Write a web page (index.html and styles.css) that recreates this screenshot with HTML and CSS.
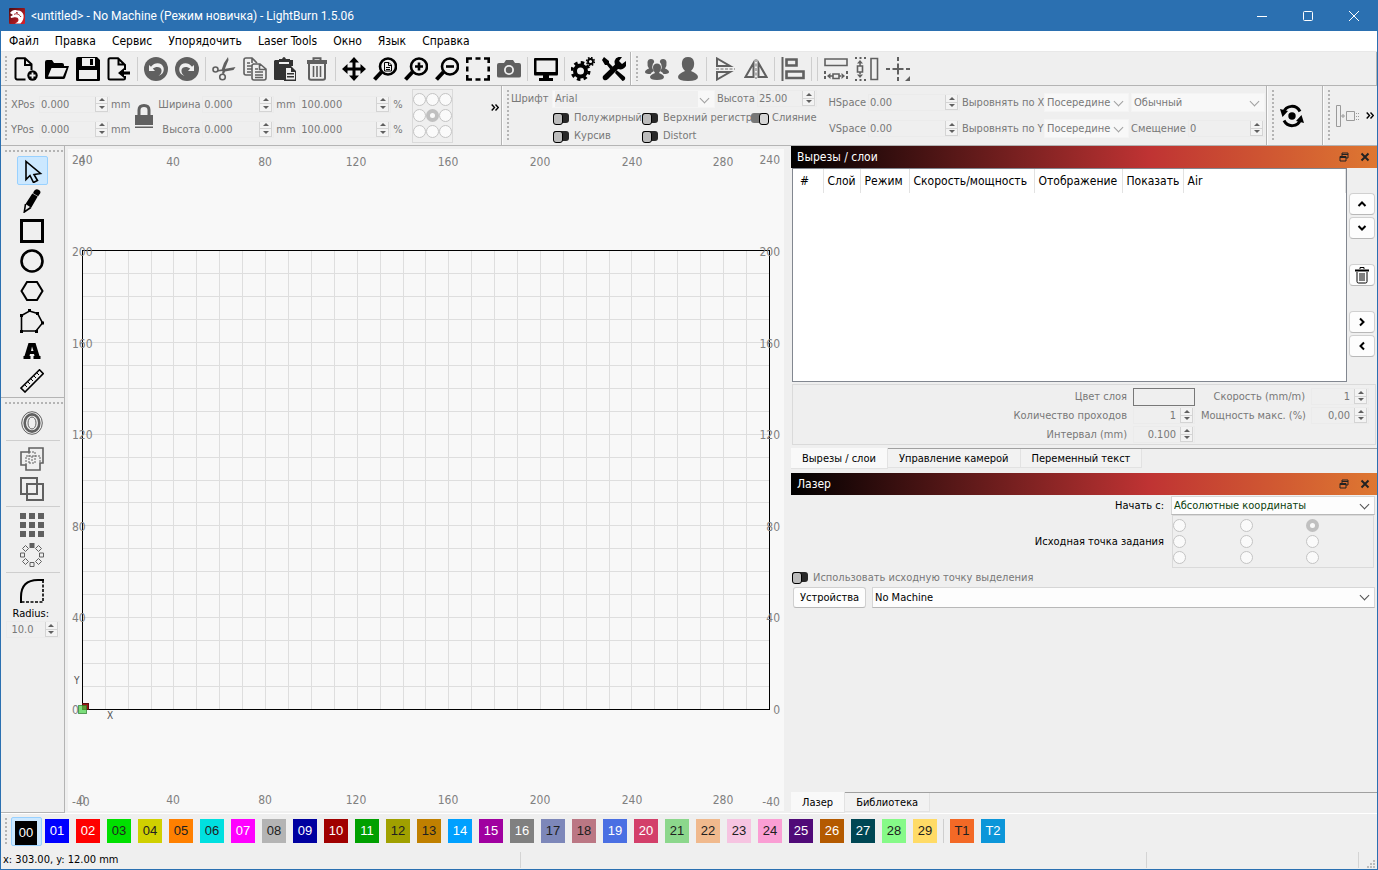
FILE: index.html
```html
<!DOCTYPE html>
<html lang="ru">
<head>
<meta charset="utf-8">
<title>&lt;untitled&gt; - No Machine (Режим новичка) - LightBurn 1.5.06</title>
<link rel="stylesheet" href="styles.css">
</head>
<body>
<div class="window">
  <header class="titlebar">
    <svg class="app-logo" viewBox="0 0 16 16"><defs><linearGradient id="lg" x1="0" x2="1" y1="0" y2="1"><stop offset="0" stop-color="#4a0d12"/><stop offset="1" stop-color="#e0202a"/></linearGradient></defs><rect width="16" height="16" rx="1" fill="url(#lg)"/><path fill="#fff" d="M1 5c2-2.500 4-3.500 7-2.500C11 2 14 4 14.500 7c.5 3-.5 6-3 8.500H6c2-1 3.500-2 3.500-3.500C9.500 9.500 7 9 4.500 9.500L2 10l-.5-1.500L4 7z"/><path d="M5 6.500C7 5 10 6 12 9M7 4.500l2 .5" stroke="#9c1a20" fill="none"/></svg>
    <h1 class="window-title">&lt;untitled&gt; - No Machine (Режим новичка) - LightBurn 1.5.06</h1>
    <div class="window-controls">
      <button aria-label="Свернуть"><svg viewBox="0 0 10 10"><path d="M0 5.500h10"/></svg></button>
      <button aria-label="Развернуть"><svg viewBox="0 0 10 10"><rect x=".5" y=".5" width="9" height="9" rx="1"/></svg></button>
      <button aria-label="Закрыть"><svg viewBox="0 0 10 10"><path d="M0 0l10 10M10 0L0 10"/></svg></button>
    </div>
  </header>

  <nav class="menubar">
    <button>Файл</button><button>Правка</button><button>Сервис</button><button>Упорядочить</button><button>Laser Tools</button><button>Окно</button><button>Язык</button><button>Справка</button>
  </nav>

  <div class="toolrow main-tools">
    <div class="toolbar">
      <span class="grip"></span>
      <button class="tool" aria-label="Создать"><svg viewBox="0 0 24 24"><path class="l2" d="M11.500 22.500H3a2 2 0 0 1-1.500-1.500V3A2 2 0 0 1 3 1.200h8l6.500 6V13M11 1.500V8h6"/><circle cx="18.500" cy="18.500" r="5.200" class="f"/><path stroke="#efefef" stroke-width="1.800" d="M15.500 18.500h6M18.500 15.500v6"/></svg></button>
      <button class="tool" aria-label="Открыть"><svg viewBox="0 0 24 24"><path class="f" d="M0 21V5q0-2 2-2h5l2 3h8q2 0 2 2v1h5l-4 12q-.5 1-1.500 1H1q-1 0-1-1z"/><path fill="#efefef" d="M6.500 11H21.500L18 19.500H3z"/></svg></button>
      <button class="tool" aria-label="Сохранить"><svg viewBox="0 0 24 24"><path class="f" fill-rule="evenodd" d="M2 0h19l3 3v20q0 1-1 1H1q-1 0-1-1V2q0-2 2-2zM6 1v8h13V1zM3 13v9h18v-9z"/><rect x="14" y="2" width="3" height="6" class="f"/></svg></button>
      <button class="tool" aria-label="Импорт"><svg viewBox="0 0 24 24"><path class="l2" d="M18 13V8l-7-6.800H3Q1.500 1.200 1.500 3v18q0 1.500 1.500 1.500h13.500q1.500 0 1.500-1.500v-2M11.500 1.500V7.500H18"/><path class="f" d="M11 16l6-5v3.500h6v3h-6V21z"/></svg></button>
      <i class="sep"></i>
      <button class="tool" aria-label="Отменить"><svg class="gray" viewBox="0 0 24 24"><circle cx="12" cy="12" r="12" class="f"/><path d="M5 8v6h6l-2.200-2.500C12 9 17 9.500 17.500 13c.3 3-1 4.500-3 6 4-1.500 6-4.500 5-8.500C18 5.500 11 4.500 7 9.700z" fill="#efefef"/></svg></button>
      <button class="tool" aria-label="Вернуть"><svg class="gray" viewBox="0 0 24 24"><circle cx="12" cy="12" r="12" class="f"/><path d="M19 8v6h-6l2.200-2.500C12 9 7 9.500 6.500 13c-.3 3 1 4.500 3 6-4-1.500-6-4.500-5-8.500C6 5.500 13 4.500 17 9.700z" fill="#efefef"/></svg></button>
      <i class="sep"></i>
      <button class="tool" aria-label="Вырезать"><svg class="gray" viewBox="0 0 24 24"><circle cx="3.500" cy="12.500" r="2.500" class="l"/><circle cx="10.500" cy="20" r="2.800" class="l"/><path class="f" d="M6 13l6-1L23.500 10l-2 3-8.500 1.500L12 17l-2-.5.500-2.500-4.500.5zM9.500 13L12 6l4-6 .5 3-4.500 11z"/></svg></button>
      <button class="tool" aria-label="Копировать"><svg class="gray" viewBox="0 0 24 24"><path class="l" d="M8 18H3q-2 0-2-2V3q0-2 2-2h6l5 5M9 1v5M4 6h3M4 9h5M4 12h5M4 15h4"/><path class="l" fill="#efefef" d="M10 7h7l6 5v9q0 2-2 2H11q-2 0-2-2V9q0-2 2-2zM16.500 7v5.500H23M12 12h3M12 15h8M12 18h8M12 20.500h8"/></svg></button>
      <button class="tool" aria-label="Вставить"><svg class="dark" viewBox="0 0 24 24"><path class="f" d="M1 3h4V2h3q2-4 4 0h4v1h3v6h-8v14H1q-1 0-1-1V4zM5 5v2h10V5z" fill-rule="evenodd"/><path class="f" d="M11 9h6l5 5v10H10V10z"/><path fill="#efefef" d="M12 11h5v4h4v7.500h-9z"/><path class="f" d="M13 16h7v1.500h-7zM13 19h7v1.500h-7z"/></svg></button>
      <button class="tool" aria-label="Удалить"><svg class="gray" viewBox="0 0 24 24"><path class="l2" d="M4 7v14q0 1.800 2 1.800h12q2 0 2-1.800V7M8.500 3V1.200h7V3"/><path class="f" d="M2 3h20v4H2z"/><path class="l" d="M8.500 9v11M12 9v11M15.500 9v11"/></svg></button>
      <i class="sep"></i>
      <button class="tool" aria-label="Переместить"><svg viewBox="0 0 24 24"><path class="l3" d="M12 3v18M3 12h18"/><path class="f" d="M12 0l5 5.500H7zM12 24l5-5.500H7zM0 12l5.500-5v10zM24 12l-5.500-5v10z"/></svg></button>
      <button class="tool" aria-label="Масштаб по странице"><svg viewBox="0 0 24 24"><circle cx="15" cy="9.500" r="8" class="l25"/><path class="l4" d="M8.500 15L1.500 22.500"/><path class="l1" d="M11.500 5.500h4.500l2.500 2.500V14h-7zM15.500 5.500V8.500h3M13 10.500h4M13 12.500h4"/></svg></button>
      <button class="tool" aria-label="Приблизить"><svg viewBox="0 0 24 24"><circle cx="15" cy="9.500" r="8" class="l25"/><path class="l4" d="M8.500 15L1.500 22.500"/><path class="l25" d="M11 9.500h8M15 5.500v8"/></svg></button>
      <button class="tool" aria-label="Отдалить"><svg viewBox="0 0 24 24"><circle cx="15" cy="9.500" r="8" class="l25"/><path class="l4" d="M8.500 15L1.500 22.500"/><path class="l25" d="M11 9.500h8"/></svg></button>
      <button class="tool" aria-label="Рамка"><svg viewBox="0 0 24 24"><path class="l25" d="M1.200 6V1.500H6M9.500 1.500h5M18 1.500h4.700V6M22.700 9.500v5M22.700 18v4.500H18M14.500 22.500h-5M6 22.500H1.200V18M1.200 14.500v-5"/></svg></button>
      <button class="tool" aria-label="Камера"><svg class="gray" viewBox="0 0 24 24"><path class="f" d="M2 6h5l2-3h7l2 3h4q2 0 2 2v11q0 1.500-2 1.500H2q-2 0-2-1.500V8q0-2 2-2z"/><circle cx="12" cy="13" r="5" fill="#efefef"/><circle cx="12" cy="13" r="3.200" class="f"/></svg></button>
      <i class="sep"></i>
      <button class="tool" aria-label="Просмотр"><svg viewBox="0 0 24 24"><path class="f" fill-rule="evenodd" d="M1 1h22q1 0 1 1v15q0 1.500-1 1.500H15V21h4v3H5v-3h4v-2.500H1Q0 18.500 0 17V2q0-1 1-1zM2.500 3.500V15h19V3.500z"/></svg></button>
      <i class="sep"></i>
      <button class="tool" aria-label="Настройки"><svg viewBox="0 0 24 24"><circle cx="9.500" cy="14" r="5.500" stroke="#000" stroke-width="4" fill="none"/><circle cx="9.500" cy="14" r="8.500" stroke="#000" stroke-width="3" stroke-dasharray="3.500 3.176" fill="none"/><circle cx="19.500" cy="4.500" r="2.500" stroke="#000" stroke-width="1.800" fill="none"/><circle cx="19.500" cy="4.500" r="3.900" stroke="#000" stroke-width="1.600" stroke-dasharray="1.600 1.463" fill="none"/></svg></button>
      <button class="tool" aria-label="Настройки устройства"><svg viewBox="0 0 24 24"><path class="f" d="M2 0l5 4v2l4 4-2.500 2.500L5 8H3L0 3zM14.500 13l8.500 7q1 3-2.500 4L13 16z"/><path class="f" d="M24 4l-4 3-3-3 3-4q-6-1-7.500 4 0 3 .5 3.500L1 19q-1 3 1 4t4-1l10-10q5 1.500 8-3z"/></svg></button>
    </div>
    <div class="toolbar last">
      <span class="grip"></span>
      <button class="tool" aria-label="Группировать"><svg class="gray" viewBox="0 0 24 24"><path class="f" d="M0 15q0-2 4-3.500Q2 9 2.500 5 3 2 6 2t3.200 3q-2 2-2 5 0 2 1.800 4-3 1.500-3.500 3Q0 17 0 15zM24 15q0-2-4-3.500 2-2.500 1.500-6.500Q21 2 18 2t-3.200 3q2 2 2 5 0 2-1.800 4 3 1.500 3.500 3 5.500 0 5.500-2z"/><path class="f" d="M5 20q0-2 5-4-2.500-3-2-6 .5-3.500 4-3.500t4 3.500q.5 3-2 6 5 2 5 4 0 3-7 3t-7-3z"/></svg></button>
      <button class="tool" aria-label="Разгруппировать"><svg class="gray" viewBox="0 0 24 24"><path class="f" d="M2 20q0-3 7-6-4-4-3-9 .8-5 6-5t6 5q1 5-3 9 7 3 7 6 0 4-10 4T2 20z"/></svg></button>
      <i class="sep"></i>
      <button class="tool" aria-label="Отразить по вертикали"><svg class="gray" viewBox="0 0 24 24"><path class="l2" d="M4 9V1.500L17 9zM4 15v7.500L17 15z"/><path d="M3 12h19" class="l2 faint" stroke-dasharray="3 1.500"/></svg></button>
      <button class="tool" aria-label="Отразить по горизонтали"><svg class="gray" viewBox="0 0 24 24"><path class="l2" d="M9.500 6v14H1.500zM14.500 6v14h8z"/><path d="M12 2v20" class="l2 faint" stroke-dasharray="3 1.500"/></svg></button>
      <i class="sep"></i>
      <button class="tool" aria-label="Выровнять по левому краю"><svg class="gray" viewBox="0 0 24 24"><path class="l2" d="M1.500 0v24"/><path class="l25" d="M5.500 2.500h10v6h-10zM5.500 14.500h17v6.500h-17z"/></svg></button>
      <i class="sep"></i><i class="sep"></i>
      <button class="tool" aria-label="Распределить по горизонтали"><svg class="gray" viewBox="0 0 24 24"><path class="l" d="M1 2h22v6.500H1zM9 17h6v4.500H9z"/><path class="f" d="M3 19l3.500-3v6zM21 19l-3.500-3v6zM6 18.300h3v1.500H6zM15 18.300h3v1.500h-3z"/><path class="l2" stroke-dasharray="3 2" d="M1 14v10M23 14v10"/></svg></button>
      <button class="tool" aria-label="Распределить по вертикали"><svg class="gray" viewBox="0 0 24 24"><path class="l" d="M16 1.500h6.500v21H16zM2.500 9h5v6h-5z"/><path class="f" d="M5 3l3 3.500H2zM5 21l3-3.500H2zM4.300 6h1.500v3H4.300zM4.300 15h1.500v3H4.300z"/><path class="l2" stroke-dasharray="2 2.500" d="M0 1h11M0 23h11"/></svg></button>
      <button class="tool" aria-label="Переместить в центр"><svg class="gray" viewBox="0 0 24 24"><path class="l2" d="M12 0v4M12 6.500v11M12 20v4M0 12h4M6.500 12h11M20 12h4"/><path class="f" d="M24 19v5h-5z"/></svg></button>
    </div>
  </div>

  <div class="toolrow props">
    <div class="toolbar shape-props">
      <span class="grip"></span>
      <div class="pos-grid">
        <label for="xpos">XPos</label><span class="spin"><input id="xpos" value="0.000" disabled><span class="steps"><button></button><button></button></span></span><span>mm</span>
        <label for="ypos">YPos</label><span class="spin"><input id="ypos" value="0.000" disabled><span class="steps"><button></button><button></button></span></span><span>mm</span>
      </div>
      <button class="lock" aria-label="Сохранять пропорции"><svg class="gray" viewBox="0 0 20 24"><path class="l3" d="M5 11V6q0-4.500 5-4.500T15 6v5"/><path class="f" d="M1 11h18v10H1zM1 22.500h18V24H1z"/></svg></button>
      <div class="size-grid">
        <label for="w">Ширина</label><span class="spin"><input id="w" value="0.000" disabled><span class="steps"><button></button><button></button></span></span><span>mm</span><span class="spin"><input aria-label="Ширина %" value="100.000" disabled><span class="steps"><button></button><button></button></span></span><span>%</span>
        <label for="h">Высота</label><span class="spin"><input id="h" value="0.000" disabled><span class="steps"><button></button><button></button></span></span><span>mm</span><span class="spin"><input aria-label="Высота %" value="100.000" disabled><span class="steps"><button></button><button></button></span></span><span>%</span>
      </div>
      <div class="anchor" role="radiogroup" aria-label="Точка привязки">
        <input type="radio" name="an"><input type="radio" name="an"><input type="radio" name="an"><input type="radio" name="an"><input type="radio" name="an" checked><input type="radio" name="an"><input type="radio" name="an"><input type="radio" name="an"><input type="radio" name="an">
      </div>
      <button class="more push" aria-label="Ещё"><svg viewBox="0 0 8 7"><path d="M.7.500l2.800 3-2.800 3M4.500.5l2.800 3-2.800 3"/></svg></button>
    </div>
    <div class="toolbar font-props">
      <span class="grip"></span>
      <div class="font-block">
        <div class="font-row">
          <label for="font">Шрифт</label><span class="combo font-select"><select id="font" disabled><option>Arial</option></select></span>
          <label for="fh">Высота</label><span class="spin"><input id="fh" value="25.00" disabled><span class="steps"><button></button><button></button></span></span>
        </div>
        <div class="font-flags">
          <label><input type="checkbox" class="toggle">Полужирный</label><label><input type="checkbox" class="toggle">Верхний регистр</label><label><input type="checkbox" class="toggle" checked>Слияние</label>
          <label><input type="checkbox" class="toggle">Курсив</label><label><input type="checkbox" class="toggle">Distort</label>
        </div>
      </div>
      <div class="space-grid">
        <label for="hs">HSpace</label><span class="spin"><input id="hs" value="0.00" disabled><span class="steps"><button></button><button></button></span></span>
        <label for="ax">Выровнять по X</label><span class="combo"><select id="ax" disabled><option>Посередине</option></select></span>
        <span class="combo"><select aria-label="Режим" disabled><option>Обычный</option></select></span>
        <label for="vs">VSpace</label><span class="spin"><input id="vs" value="0.00" disabled><span class="steps"><button></button><button></button></span></span>
        <label for="ay">Выровнять по Y</label><span class="combo"><select id="ay" disabled><option>Посередине</option></select></span>
        <span class="offset"><label for="off">Смещение</label><span class="spin"><input id="off" value="0" disabled><span class="steps"><button></button><button></button></span></span></span>
      </div>
    </div>
    <div class="toolbar refresh">
      <span class="grip"></span>
      <button class="tool" aria-label="Обновить"><svg viewBox="0 0 24 24"><path class="l3" d="M3.500 8.500C6 1 16 0 20 7.500M20.500 15.500C18 23 8 24 4 16.500"/><path class="f" d="M0 5l8 2-5.500 6zM24 19l-8-2 5.500-6z"/><circle cx="12" cy="12" r="3.700" class="f"/></svg></button>
    </div>
    <div class="toolbar dock-props">
      <span class="grip"></span>
      <svg class="dock-icon" viewBox="0 0 24 24"><path d="M.5 1.500h4v21h-4zM10.500 7.500h8v9h-8M10.500 7.500v9M5 12h4M7 10v4"/><path stroke-dasharray="1 1" d="M20 9.500h4M20 12.500h4M20 15.500h4"/></svg>
      <button class="more" aria-label="Ещё"><svg viewBox="0 0 8 7"><path d="M.7.500l2.800 3-2.800 3M4.500.5l2.800 3-2.800 3"/></svg></button>
    </div>
  </div>

  <main class="workspace">
    <aside class="side-tools">
      <div class="side-group">
        <span class="grip-h"></span>
        <button class="tool active" aria-label="Выделение"><svg viewBox="0 0 24 24"><path class="l" d="M6 2.500v18l4-4 3.500 7 4-2-3.500-6 6.500-1z"/></svg></button>
        <button class="tool" aria-label="Карандаш"><svg viewBox="0 0 24 24"><path class="f" d="M14 2q2-3 5-1t0 5l-.8 1.200-5.200-3zM12.300 4.500l5.400 3-6.500 11.200L5.500 15z"/><path class="l" d="M5.500 15l-1.200 8 6.500-4.500"/></svg></button>
        <button class="tool" aria-label="Прямоугольник"><svg viewBox="0 0 24 24"><rect x="1.500" y="1.500" width="21" height="21" class="l3"/></svg></button>
        <button class="tool" aria-label="Эллипс"><svg viewBox="0 0 24 24"><circle cx="12" cy="12" r="10.500" class="l25"/></svg></button>
        <button class="tool" aria-label="Многоугольник"><svg viewBox="0 0 24 24"><path class="l2" d="M1.500 12L7 3h10l5.500 9L17 21H7z"/></svg></button>
        <button class="tool" aria-label="Изменить узлы"><svg viewBox="0 0 24 24"><path class="l" d="M1.500 22V6.500L9.500 2l8 2.500 5 9.500-6.500 8z"/><path class="f" d="M0 5h3v3H0zM8 0h3v3H8zM16 3h3v3h-3zM21 12.500h3v3h-3zM15 21h3v3h-3zM0 21h3v3H0z"/></svg></button>
        <button class="tool" aria-label="Текст"><svg viewBox="0 0 24 24"><path class="f" fill-rule="evenodd" d="M8.500 4h7l4 13h1v3h-7v-3h1l-.5-2h-4l-.5 2h1v3h-7v-3h1zM11 12h2.500L12 7.500z"/></svg></button>
        <button class="tool" aria-label="Измерить"><svg viewBox="0 0 24 24"><path class="l" d="M1 19L19.500.8 23.300 4.600 5 23z"/><path class="l1" d="M5 16l2 2M8 13l2 2M11 10l2 2M14 7l2 2M17 4l2 2"/></svg></button>
      </div>
      <div class="side-group">
        <span class="grip-h"></span>
        <button class="tool" aria-label="Смещение контура"><svg class="gray" viewBox="0 0 24 24"><ellipse cx="12" cy="12" rx="10.300" ry="11.300" class="l1"/><ellipse cx="12" cy="12" rx="7.300" ry="8.600" class="l25"/><ellipse cx="12" cy="12" rx="4" ry="6" class="l1"/></svg></button>
        <i class="sep-h"></i>
        <button class="tool" aria-label="Сварить"><svg class="gray" viewBox="0 0 24 24"><path class="l" d="M9 1h14v15h-3v7H6v-5H1V5h8z"/><path class="l1" stroke-dasharray="2 1" d="M9 5h6v11H9M6 18V9h14v7M9 5v11M12 9v5"/></svg></button>
        <button class="tool" aria-label="Логическое вычитание"><svg class="gray" viewBox="0 0 24 24"><path class="l2" d="M1 1h16v16H1zM7 7h16v16H7z"/></svg></button>
        <i class="sep-h"></i>
        <button class="tool" aria-label="Сетка"><svg class="gray" viewBox="0 0 24 24"><path class="f" d="M0 0h6v6H0zM9 0h6v6H9zM18 0h6v6h-6zM0 9h6v6H0zM9 9h6v6H9zM18 9h6v6h-6zM0 18h6v6H0zM9 18h6v6H9zM18 18h6v6h-6z"/></svg></button>
        <button class="tool" aria-label="Круговой массив"><svg class="gray" viewBox="0 0 24 24"><path class="f" d="M9.500 0h5v5h-5z"/><path class="l1" d="M10 19.500h4v4h-4zM.5 10h4v4h-4zM19.500 10h4v4h-4zM5.500 2.500l3 3-3 3-3-3zM18.500 2.500l3 3-3 3-3-3zM5.500 15.500l3 3-3 3-3-3zM18.500 15.500l3 3-3 3-3-3z"/></svg></button>
        <i class="sep-h"></i>
        <button class="tool" aria-label="Скругление"><svg viewBox="0 0 24 24"><path class="l2" d="M1 24v-6Q1 1 18 1h6"/><path class="l" stroke-dasharray="3 1.500" d="M23 1v22H1"/></svg></button>
        <label class="radius-label" for="radius">Radius:</label>
        <span class="spin radius"><input id="radius" value="10.0" disabled><span class="steps"><button></button><button></button></span></span>
      </div>
    </aside>

    <section class="canvas">
      <svg viewBox="68 149 716 662">
        <path class="grid-line" d="M105.500 251v458M128.500 251v458M151.500 251v458M173.500 251v458M196.500 251v458M219.500 251v458M242.500 251v458M265.500 251v458M288.500 251v458M311.500 251v458M334.500 251v458M357.500 251v458M380.500 251v458M403.500 251v458M425.500 251v458M448.500 251v458M471.500 251v458M494.500 251v458M517.500 251v458M540.500 251v458M563.500 251v458M586.500 251v458M609.500 251v458M631.500 251v458M654.500 251v458M677.500 251v458M700.500 251v458M723.500 251v458M746.500 251v458M83 273.500h686M83 296.500h686M83 319.500h686M83 342.500h686M83 365.500h686M83 388.500h686M83 411.500h686M83 434.500h686M83 457.500h686M83 480.500h686M83 502.500h686M83 525.500h686M83 548.500h686M83 571.500h686M83 594.500h686M83 617.500h686M83 640.500h686M83 663.500h686M83 686.500h686"/>
        <rect class="bed" x="82.500" y="250.500" width="687" height="459"/>
        <g class="ticks" text-anchor="middle">
          <text x="82" y="166">0</text><text x="173" y="166">40</text><text x="265" y="166">80</text><text x="356" y="166">120</text><text x="448" y="166">160</text><text x="540" y="166">200</text><text x="632" y="166">240</text><text x="723" y="166">280</text>
          <text x="82" y="804">0</text><text x="173" y="804">40</text><text x="265" y="804">80</text><text x="356" y="804">120</text><text x="448" y="804">160</text><text x="540" y="804">200</text><text x="632" y="804">240</text><text x="723" y="804">280</text>
        </g>
        <g class="ticks">
          <text x="72" y="164">240</text><text x="72" y="256">200</text><text x="72" y="348">160</text><text x="72" y="439">120</text><text x="72" y="531">80</text><text x="72" y="622">40</text><text x="72" y="714">0</text><text x="72" y="806">-40</text>
        </g>
        <g class="ticks" text-anchor="end">
          <text x="780" y="164">240</text><text x="780" y="256">200</text><text x="780" y="348">160</text><text x="780" y="439">120</text><text x="780" y="531">80</text><text x="780" y="622">40</text><text x="780" y="714">0</text><text x="780" y="806">-40</text>
        </g>
        <g class="axis"><text x="74" y="684">Y</text><text x="107" y="719">X</text></g>
        <rect x="82.500" y="703.500" width="6" height="6" fill="#a01414" stroke="#5a1010"/>
        <rect x="78.500" y="705.500" width="8" height="8" fill="#46d246" fill-opacity=".7" stroke="#2c7a2c" stroke-opacity=".7"/>
      </svg>
    </section>

    <aside class="dock">
      <section class="cuts">
        <header class="dock-title"><h2>Вырезы / слои</h2><button aria-label="Открепить"><svg viewBox="0 0 10 10"><path d="M3 1h6v5H7M3 2.500h6M3 1v3M1 4.500h6V9H1zM1 5.500h6"/></svg></button><button aria-label="Закрыть панель"><svg viewBox="0 0 10 10"><path class="x" d="M1.500 1.500l7 7M8.500 1.500l-7 7"/></svg></button></header>
        <div class="layers">
          <div class="layer-list">
            <table>
              <colgroup><col class="c-num"><col class="c-layer"><col class="c-mode"><col class="c-speed"><col class="c-out"><col class="c-show"><col></colgroup>
              <thead><tr><th>#</th><th>Слой</th><th>Режим</th><th>Скорость/мощность</th><th>Отображение</th><th>Показать</th><th>Air</th></tr></thead>
            </table>
          </div>
          <div class="layer-buttons">
            <button aria-label="Вверх"><svg viewBox="0 0 10 10"><path d="M1.500 7L5 3.500 8.500 7"/></svg></button>
            <button aria-label="Вниз"><svg viewBox="0 0 10 10"><path d="M1.500 3L5 6.500 8.500 3"/></svg></button>
            <button class="spaced" aria-label="Удалить слой"><svg class="bin" viewBox="0 0 14 18"><path class="l" d="M2 6v9.500q0 1.500 1.500 1.500h7q1.500 0 1.500-1.500V6M5 3V1.500h4V3M5 7v8M7 7v8M9 7v8"/><path class="l2" d="M0 4.500h14"/></svg></button>
            <button class="spaced" aria-label="Вправо"><svg viewBox="0 0 10 10"><path d="M3 1.500L6.500 5 3 8.500"/></svg></button>
            <button aria-label="Влево"><svg viewBox="0 0 10 10"><path d="M7 1.500L3.500 5 7 8.500"/></svg></button>
          </div>
        </div>
        <div class="cut-props">
          <label for="col">Цвет слоя</label><button id="col" class="color-box"></button>
          <label for="sp">Скорость (mm/m)</label><span class="spin num"><input id="sp" value="1" disabled><span class="steps"><button></button><button></button></span></span>
          <label for="ps">Количество проходов</label><span class="spin num"><input id="ps" value="1" disabled><span class="steps"><button></button><button></button></span></span>
          <label for="pw">Мощность макс. (%)</label><span class="spin num"><input id="pw" value="0,00" disabled><span class="steps"><button></button><button></button></span></span>
          <label for="iv">Интервал (mm)</label><span class="spin num"><input id="iv" value="0.100" disabled><span class="steps"><button></button><button></button></span></span>
        </div>
        <div class="tabs" role="tablist"><button role="tab" class="on">Вырезы / слои</button><button role="tab">Управление камерой</button><button role="tab">Переменный текст</button></div>
      </section>
      <section class="laser">
        <header class="dock-title"><h2>Лазер</h2><button aria-label="Открепить"><svg viewBox="0 0 10 10"><path d="M3 1h6v5H7M3 2.500h6M3 1v3M1 4.500h6V9H1zM1 5.500h6"/></svg></button><button aria-label="Закрыть панель"><svg viewBox="0 0 10 10"><path class="x" d="M1.500 1.500l7 7M8.500 1.500l-7 7"/></svg></button></header>
        <div class="laser-form">
          <label for="start">Начать с:</label><span class="combo live green"><select id="start"><option>Абсолютные координаты</option></select></span>
          <span>Исходная точка задания</span>
          <div class="origin" role="radiogroup" aria-label="Исходная точка задания">
            <input type="radio" name="or"><input type="radio" name="or"><input type="radio" name="or" checked><input type="radio" name="or"><input type="radio" name="or"><input type="radio" name="or"><input type="radio" name="or"><input type="radio" name="or"><input type="radio" name="or">
          </div>
        </div>
        <label class="use-origin"><input type="checkbox" class="toggle">Использовать исходную точку выделения</label>
        <div class="device-row"><button class="push-button">Устройства</button><span class="combo live"><select aria-label="Устройство"><option>No Machine</option></select></span></div>
        <div class="tabs bottom" role="tablist"><button role="tab" class="on">Лазер</button><button role="tab">Библиотека</button></div>
      </section>
    </aside>
  </main>

  <div class="palette">
    <span class="grip"></span>
    <span class="selected"><button class="swatch c00">00</button></span><button class="swatch c01">01</button><button class="swatch c02">02</button><button class="swatch c03 dk">03</button><button class="swatch c04 dk">04</button><button class="swatch c05 dk">05</button><button class="swatch c06 dk">06</button><button class="swatch c07">07</button><button class="swatch c08 dk">08</button><button class="swatch c09">09</button><button class="swatch c10">10</button><button class="swatch c11">11</button><button class="swatch c12 dk">12</button><button class="swatch c13 dk">13</button><button class="swatch c14">14</button><button class="swatch c15">15</button><button class="swatch c16">16</button><button class="swatch c17 dk">17</button><button class="swatch c18 dk">18</button><button class="swatch c19">19</button><button class="swatch c20">20</button><button class="swatch c21 dk">21</button><button class="swatch c22 dk">22</button><button class="swatch c23 dk">23</button><button class="swatch c24 dk">24</button><button class="swatch c25">25</button><button class="swatch c26">26</button><button class="swatch c27">27</button><button class="swatch c28 dk">28</button><button class="swatch c29 dk">29</button><i class="sep"></i><button class="swatch t1 dk">T1</button><button class="swatch t2">T2</button>
  </div>
  <footer class="statusbar"><span class="coords">x: 303.00, y: 12.00 mm</span><span class="cell"></span><span class="cell short"></span><span class="cell grip-cell"><svg viewBox="0 0 8 8"><path d="M6 0h2v2H6zM3 3h2v2H3zM6 3h2v2H6zM0 6h2v2H0zM3 6h2v2H3zM6 6h2v2H6z"/></svg></span></footer>
</div>
</body>
</html>
```
FILE: styles.css
```css
* { box-sizing: border-box; }
body { margin: 0; font: 11px/15px "DejaVu Sans Condensed", "DejaVu Sans", sans-serif; color: #000; background: #efefef; }
button, input, select { font: inherit; color: inherit; margin: 0; padding: 0; border: 0; background: none; border-radius: 0; }
h1, h2 { margin: 0; font: inherit; }
label, span, button { white-space: nowrap; }
svg { display: block; }

.window { display: flex; flex-direction: column; min-height: 100vh; border: 1px solid #2b70b1; border-top: 0; }

/* icon strokes */
.f { fill: currentColor; }
.l, .l1, .l2, .l25, .l3, .l4 { fill: none; stroke: currentColor; }
.l { stroke-width: 1.6; }
.l1 { stroke-width: 1; }
.l2 { stroke-width: 2; }
.l25 { stroke-width: 2.6; }
.l3 { stroke-width: 3; }
.l4 { stroke-width: 4; }
.gray { color: #606060; }
.dark { color: #333; }
.faint { opacity: .45; }

/* title and menu */
.titlebar { display: flex; align-items: center; height: 31px; padding-left: 8px; background: #2b70b1; color: #fff; }
.app-logo { width: 16px; height: 16px; }
.window-title { margin-left: 6px; font: 12px/16px Roboto, sans-serif; }
.window-controls { display: flex; margin-left: auto; }
.window-controls button { display: grid; place-items: center; width: 46px; height: 31px; }
.window-controls svg { width: 10px; height: 10px; fill: none; stroke: #fff; }
.menubar { display: flex; height: 21px; padding: 1px 0 0 2px; font-size: 12px; background: #fff; border-bottom: 1px solid #e8e8e8; }
.menubar button { padding: 0 6px; margin-right: 4px; }

/* toolbars */
.toolrow { display: flex; border-bottom: 1px solid #b4b4b4; }
.toolbar { display: flex; align-items: center; border-right: 1px solid #b4b4b4; }
.toolbar + .toolbar { border-left: 1px solid #fcfcfc; }
.main-tools { height: 34px; }
.toolbar.last { flex: 1; }
.grip { flex: none; width: 2px; align-self: stretch; margin: 4px 4px; background: repeating-linear-gradient(#b4b4b4 0 2px, #efefef 2px 4px); }
.grip-h { height: 2px; width: 58px; margin: 4px 0 4px 3px; background: repeating-linear-gradient(90deg, #b4b4b4 0 2px, #efefef 2px 4px); }
.tool { flex: none; width: 31px; height: 30px; padding: 0 4px 0 3px; color: #000; }
.tool svg { width: 24px; height: 24px; }
.sep { flex: none; width: 1px; height: 24px; margin: 0 3px 0 2px; background: #cecece; }

/* property rows */
.props { height: 60px; color: #787878; }
.shape-props { flex: 0 0 501px; }
.pos-grid, .size-grid { display: grid; grid-auto-rows: 25px; align-items: center; padding-top: 2px; }
.pos-grid { grid-template-columns: 27px 71px auto; column-gap: 1px; }
.size-grid { grid-template-columns: 42px 72px 21px 92px auto; column-gap: 2px; }
.size-grid label { text-align: right; }
.lock { width: 20px; margin: 0 4px; }
.lock svg { width: 20px; height: 24px; }
.anchor { display: grid; grid-template-columns: repeat(3, 13px); grid-auto-rows: 16px; align-items: center; margin-left: 9px; padding: 2px 0; border: 1px solid #dadada; }
.more { width: 8px; }
.more svg { width: 8px; height: 7px; fill: none; stroke: #000; stroke-width: 1.4; }
.push { margin: -16px 0 0 auto; }
.shape-props .push { margin-right: 2px; }

.spin { display: flex; min-width: 0; height: 17px; border: 1px solid #ebebeb; }
.spin input { flex: 1; width: 0; min-width: 0; padding-left: 1px; }
.steps { flex: none; display: flex; flex-direction: column; width: 13px; margin-right: 1px; border: 1px solid #d4d4d4; border-top: 0; background: #f3f3f3; }
.steps button { flex: 1; display: grid; place-items: center; }
.steps button + button { border-top: 1px solid #d4d4d4; }
.steps button::before { content: ""; border: 3px solid transparent; border-top-width: 0; border-bottom-color: #606060; }
.steps button + button::before { border-width: 3px 3px 0; border-top-color: #606060; }

.combo { position: relative; display: block; height: 19px; border: 1px solid #f4f4f4; background: #f8f8f8; }
.combo select { display: block; width: 100%; height: 100%; padding: 0 16px 0 2px; appearance: none; opacity: 1; }
.combo::after { content: ""; position: absolute; right: 6px; top: 4px; width: 6px; height: 6px; border: solid #a0a0a0; border-width: 0 1px 1px 0; transform: rotate(45deg); pointer-events: none; }
.combo.live { border: 1px solid #d6d6d6; border-bottom-color: #b8b8b8; background: #fdfdfd; }
.combo.live::after { border-color: #505050; }
.green { color: #0b3d0b; }

input[type="radio"] { appearance: none; width: 13px; height: 13px; border: 1px solid #c4c4c4; border-radius: 50%; background: #fafafa; }
input[type="radio"]:checked { border: 4px solid #c0c0c0; }
.toggle { position: relative; appearance: none; flex: none; width: 16px; height: 10px; border-radius: 3px; background: #282828; }
.toggle::before { content: ""; position: absolute; top: 0; left: 0; width: 8px; height: 10px; border: 1px solid #000; border-radius: 3px; background: #bcbcbc; }
.toggle:checked { background: #777; }
.toggle:checked::before { left: 8px; background: #d6d6d6; }

.font-props { flex: 1; }
.font-props > .grip { margin-right: 2px; }
.font-block { display: flex; flex-direction: column; width: 315px; padding-top: 2px; }
.font-row { display: grid; grid-template-columns: 39px 163px 38px 60px; column-gap: 2px; align-items: center; height: 20px; }
.font-row .combo { height: 18px; }
.font-row select { background: #efefef; background-clip: content-box; }
.font-flags { display: grid; grid-template-columns: 89px 109px auto; grid-auto-rows: 18px; padding-left: 42px; }
.font-flags label { display: flex; align-items: center; gap: 5px; }
.space-grid { flex: 1; display: grid; grid-template-columns: 40px 92px 80px 85px minmax(130px, 1fr); grid-auto-rows: 26px; column-gap: 2px; align-items: center; padding: 0 1px 0 0; }
.space-grid label { text-align: right; }
.offset { display: flex; align-items: center; gap: 2px; }
.offset .spin { flex: 1; }
.refresh { width: 56px; }
.refresh .grip { margin-right: 3px; }
.dock-props { width: 54px; border-right: 0; }
.dock-icon { flex: none; width: 24px; height: 24px; margin: 0 6px 0 1px; fill: none; stroke: #9a9a9a; }
.dock-props .grip { margin-right: 5px; }

/* workspace */
.workspace { flex: 1; display: flex; border-bottom: 1px solid #fff; }
.side-tools { flex: 0 0 64px; border-right: 1px solid #b4b4b4; border-bottom: 1px solid #b4b4b4; }
.side-group { display: flex; flex-direction: column; align-items: center; }
.side-group + .side-group { margin-top: 1px; border-top: 1px solid #b4b4b4; }
.side-tools .tool { padding: 3px; }
.side-tools .active { height: 29px; margin-bottom: 1px; padding: 2px; border: 1px solid #99d1ff; border-radius: 2px; background: #cce8ff; }
.sep-h { width: 54px; height: 1px; margin: 2px 0 3px; background: #cecece; }
.radius-label { min-width: 40px; }
.radius { width: 54px; color: #787878; }
.radius input { padding-left: 5px; }

.canvas { flex: 1; min-width: 0; margin: 3px 7px 2px 3px; background: #f8f8f8; }
.canvas svg { width: 100%; height: 100%; }
.grid-line { fill: none; stroke: #dedede; }
.bed { fill: none; stroke: #000; }
.ticks { font-size: 12px; fill: #808080; }
.axis { font-size: 10px; fill: #505050; }

/* docks */
.dock { flex: 0 0 586px; display: flex; flex-direction: column; }
.dock-title { display: flex; align-items: center; height: 22px; padding: 0 6px; color: #fff; background: linear-gradient(90deg, #000, #bf3333 61%, #de7731); }
.dock-title h2 { flex: 1; font-size: 12px; }
.dock-title button { width: 12px; margin-left: 9px; color: #222; }
.dock-title svg { width: 10px; height: 10px; margin: auto; fill: none; stroke: currentColor; }
.dock-title .x { stroke-width: 2; }
.layers { display: flex; gap: 2px; padding: 0 2px 0 1px; }
.layer-list { flex: 1; height: 214px; border: 1px solid #828790; background: #fff; }
table { width: 100%; table-layout: fixed; border-collapse: collapse; font-size: 12px; }
th { height: 24px; padding: 0 0 0 4px; border-right: 1px solid #e2e2e2; text-align: left; font-weight: 400; white-space: nowrap; }
th:first-child { padding-left: 7px; }
.c-num { width: 30px; }
.c-layer { width: 37px; }
.c-mode { width: 49px; }
.c-speed { width: 125px; }
.c-out { width: 88px; }
.c-show { width: 61px; }
.layer-buttons { display: flex; flex-direction: column; gap: 2px; width: 26px; padding-top: 25px; }
.layer-buttons button { height: 22px; border: 1px solid #d0d0d0; border-bottom-color: #b8b8b8; border-radius: 4px; background: #fdfdfd; }
.layer-buttons .spaced { margin-top: 23px; }
.layer-buttons svg { width: 10px; height: 10px; margin: auto; fill: none; stroke: #000; stroke-width: 2; }
.layer-buttons .bin { width: 14px; height: 18px; }
.layer-buttons .bin .l { stroke-width: 1; }
.cut-props { display: grid; grid-template-columns: 1fr 62px 104px 58px; grid-auto-rows: 19px; column-gap: 6px; align-items: center; margin: 2px 1px 3px; padding: 2px 6px 0; border: 1px solid #dadada; color: #787878; }
.cut-props label { text-align: right; }
.color-box { height: 18px; border: 1px solid #787878; }
.num input { text-align: right; padding-right: 4px; }
.tabs { display: flex; align-items: flex-start; border-top: 1px solid #a0a0a0; }
.tabs button { height: 19px; padding: 0 11px; border: solid #e2e2e2; border-width: 0 1px 1px 0; background: #f2f2f2; }
.tabs .on { height: 21px; margin-top: -1px; padding-top: 1px; background: #f9f9f9; }
.cuts { margin-bottom: 4px; }
.laser { flex: 1; display: flex; flex-direction: column; }
.laser-form { display: grid; grid-template-columns: 1fr 204px; column-gap: 7px; align-items: center; padding: 1px 2px 0; text-align: right; }
.origin { display: grid; grid-template-columns: repeat(3, 1fr); grid-auto-rows: 16px; align-items: center; margin: 0 1px; padding: 1px 0 2px; border: 1px solid #dadada; }
.use-origin { display: flex; align-items: center; gap: 5px; height: 18px; padding-left: 1px; color: #787878; }
.device-row { display: flex; gap: 6px; padding: 1px 2px 0; }
.push-button { width: 73px; height: 21px; border: 1px solid #d0d0d0; border-bottom-color: #b8b8b8; border-radius: 3px; background: #fdfdfd; }
.device-row .combo { flex: 1; height: 21px; }
.bottom { margin-top: auto; }

/* palette and status */
.palette { display: flex; align-items: center; height: 34px; }
.swatch { width: 24px; height: 24px; margin: 0 4px 0 3px; font: 13px/24px "Liberation Sans", sans-serif; color: #fff; }
.dk { color: #202020; }
.selected { display: flex; width: 31px; height: 29px; padding-top: 3px; border: 1px solid #99d1ff; border-radius: 2px; background: #cce8ff; }
.c00 { background: #000; }
.c01 { background: #00f; }
.c02 { background: #f00; }
.c03 { background: #00e000; }
.c04 { background: #d0d000; }
.c05 { background: #ff8000; }
.c06 { background: #00e0e0; }
.c07 { background: #f0f; }
.c08 { background: #b4b4b4; }
.c09 { background: #0000a0; }
.c10 { background: #a00000; }
.c11 { background: #00a000; }
.c12 { background: #a0a000; }
.c13 { background: #c08000; }
.c14 { background: #00a0ff; }
.c15 { background: #a000a0; }
.c16 { background: #808080; }
.c17 { background: #7d87b9; }
.c18 { background: #bb7784; }
.c19 { background: #4a6fe3; }
.c20 { background: #d33f6a; }
.c21 { background: #8cd78c; }
.c22 { background: #f0b98d; }
.c23 { background: #f6c4e1; }
.c24 { background: #fa9ed4; }
.c25 { background: #500a78; }
.c26 { background: #b45a00; }
.c27 { background: #004754; }
.c28 { background: #86fa88; }
.c29 { background: #ffdb66; }
.t1 { background: #f36926; }
.t2 { background: #0c96d9; }
.statusbar { display: flex; height: 21px; padding-top: 2px; align-items: center; }
.coords { flex: 0 0 519px; padding-left: 2px; }
.cell { flex: 1; height: 16px; border-left: 1px solid #d4d4d4; }
.cell.short { flex: 0 0 212px; }
.cell.grip-cell { flex: 0 0 19px; padding: 8px 0 0 8px; }
.grip-cell svg { width: 8px; height: 8px; fill: #bcbcbc; }
```
